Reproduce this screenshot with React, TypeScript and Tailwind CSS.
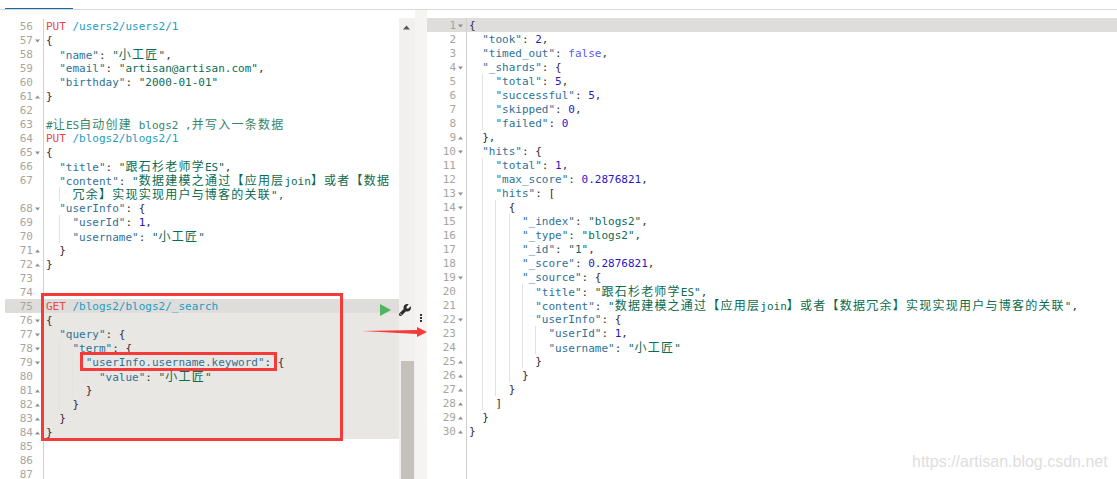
import { ReactNode } from "react";
import { FaWrench } from "react-icons/fa6";

type Row = { n?: number; fold?: "down" | "up"; text: string };

const leftRows: Row[] = [
  { n: 56, text: "PUT /users2/users2/1" },
  { n: 57, fold: "down", text: "{" },
  { n: 58, text: '  "name": "小工匠",' },
  { n: 59, text: '  "email": "artisan@artisan.com",' },
  { n: 60, text: '  "birthday": "2000-01-01"' },
  { n: 61, fold: "up", text: "}" },
  { n: 62, text: "" },
  { n: 63, text: "#让ES自动创建 blogs2 ,并写入一条数据" },
  { n: 64, text: "PUT /blogs2/blogs2/1" },
  { n: 65, fold: "down", text: "{" },
  { n: 66, text: '  "title": "跟石杉老师学ES",' },
  { n: 67, text: '  "content": "数据建模之通过【应用层join】或者【数据' },
  { text: '    冗余】实现实现用户与博客的关联",' },
  { n: 68, fold: "down", text: '  "userInfo": {' },
  { n: 69, text: '    "userId": 1,' },
  { n: 70, text: '    "username": "小工匠"' },
  { n: 71, fold: "up", text: "  }" },
  { n: 72, fold: "up", text: "}" },
  { n: 73, text: "" },
  { n: 74, text: "" },
  { n: 75, text: "GET /blogs2/blogs2/_search" },
  { n: 76, fold: "down", text: "{" },
  { n: 77, fold: "down", text: '  "query": {' },
  { n: 78, fold: "down", text: '    "term": {' },
  { n: 79, fold: "down", text: '      "userInfo.username.keyword": {' },
  { n: 80, text: '        "value": "小工匠"' },
  { n: 81, fold: "up", text: "      }" },
  { n: 82, fold: "up", text: "    }" },
  { n: 83, fold: "up", text: "  }" },
  { n: 84, fold: "up", text: "}" },
  { n: 85, text: "" },
  { n: 86, text: "" },
  { n: 87, text: "" },
];

const rightRows: Row[] = [
  { n: 1, fold: "down", text: "{" },
  { n: 2, text: '  "took": 2,' },
  { n: 3, text: '  "timed_out": false,' },
  { n: 4, fold: "down", text: '  "_shards": {' },
  { n: 5, text: '    "total": 5,' },
  { n: 6, text: '    "successful": 5,' },
  { n: 7, text: '    "skipped": 0,' },
  { n: 8, text: '    "failed": 0' },
  { n: 9, fold: "up", text: "  }," },
  { n: 10, fold: "down", text: '  "hits": {' },
  { n: 11, text: '    "total": 1,' },
  { n: 12, text: '    "max_score": 0.2876821,' },
  { n: 13, fold: "down", text: '    "hits": [' },
  { n: 14, fold: "down", text: "      {" },
  { n: 15, text: '        "_index": "blogs2",' },
  { n: 16, text: '        "_type": "blogs2",' },
  { n: 17, text: '        "_id": "1",' },
  { n: 18, text: '        "_score": 0.2876821,' },
  { n: 19, fold: "down", text: '        "_source": {' },
  { n: 20, text: '          "title": "跟石杉老师学ES",' },
  { n: 21, text: '          "content": "数据建模之通过【应用层join】或者【数据冗余】实现实现用户与博客的关联",' },
  { n: 22, fold: "down", text: '          "userInfo": {' },
  { n: 23, text: '            "userId": 1,' },
  { n: 24, text: '            "username": "小工匠"' },
  { n: 25, fold: "up", text: "          }" },
  { n: 26, fold: "up", text: "        }" },
  { n: 27, fold: "up", text: "      }" },
  { n: 28, fold: "up", text: "    ]" },
  { n: 29, fold: "up", text: "  }" },
  { n: 30, fold: "up", text: "}" },
  { text: "" },
  { text: "" },
  { text: "" },
  { text: "" },
];

// cjk chars sit on a 2-cell grid like in the ace editor
const withCjk = (text: string): ReactNode[] =>
  text.split(/([\u3000-\u9fff]+)/).map((part, i) =>
    /[\u3000-\u9fff]/.test(part) ? (
      <span key={i} className="text-[12px] tracking-[1.24px]">
        {part}
      </span>
    ) : (
      part
    )
  );

const Code = ({ text }: { text: string }) => {
  const indent = text.match(/^ */)![0].length;
  const guides = Math.floor(indent / 2);
  const body = text.slice(guides * 2);
  const parts: ReactNode[] = [];

  if (/^(PUT|GET) /.test(body)) {
    parts.push(
      <span key="m" className="text-[#e8483f]">{body.slice(0, 3)}</span>,
      " ",
      <span key="u" className="text-[#1c9cc0]">{body.slice(4)}</span>
    );
  } else if (body.startsWith("#")) {
    parts.push(<span key="c" className="text-[#36866a]">{withCjk(body)}</span>);
  } else {
    const re = /("[^"]*")(\s*:)?|(\d+(?:\.\d+)?)|(false|true)|([{}\[\]])|([,:])|(\s+)|(\S+)/g;
    let m: RegExpExecArray | null;
    let i = 0;
    while ((m = re.exec(body))) {
      i++;
      if (m[1] && m[2]) {
        parts.push(
          <span key={i} className="text-[#2f7197]">{m[1]}</span>,
          <span key={i + "c"} className="text-[#333333]">{m[2]}</span>
        );
      } else if (m[1]) {
        parts.push(<span key={i} className="text-[#0b6b50]">{withCjk(m[1])}</span>);
      } else if (m[3]) {
        parts.push(<span key={i} className="text-[#2a16c8]">{m[3]}</span>);
      } else if (m[4]) {
        parts.push(<span key={i} className="text-[#585cf6]">{m[4]}</span>);
      } else if (m[5]) {
        parts.push(<span key={i} className="text-[#3a2a3a]">{m[5]}</span>);
      } else if (m[6]) {
        parts.push(<span key={i} className="text-[#333333]">{m[6]}</span>);
      } else if (m[8]) {
        // the wrapped string: one half has no closing quote, the other no opening one
        parts.push(<span key={i} className="text-[#0b6b50]">{withCjk(m[8])}</span>);
      } else {
        parts.push(m[0]);
      }
    }
  }

  return (
    <>
      {Array.from({ length: guides }).map((_, g) => (
        <span
          key={g}
          className={
            g === 0
              ? "inline-block w-[2ch] h-[14px] align-top"
              : "inline-block w-[2ch] h-[14px] align-top border-l border-[#e4e2de]"
          }
        />
      ))}
      {parts}
    </>
  );
};

const Fold = ({ dir }: { dir?: "down" | "up" }) => (
  <span className="w-[10px] h-[14px] flex items-center justify-center pr-[1px] pt-[1px]">
    {dir && (
      <svg width="5" height="4" viewBox="0 0 5 4">
        <path d={dir === "down" ? "M0 0.5h5L2.5 3.5z" : "M0 3.5h5L2.5 0.5z"} fill="#8e8e8e" />
      </svg>
    )}
  </span>
);

const Editor = ({
  rows,
  gutter,
  active,
  selected,
}: {
  rows: Row[];
  gutter: string;
  active?: number;
  selected?: (n?: number) => boolean;
}) => (
  <div className="flex flex-col">
    {rows.map((row, i) => {
      const isActive = row.n === active;
      const isSel = selected?.(row.n);
      return (
        <div key={i} className={isActive ? "flex h-[14px] bg-[#dfdddb]" : "flex h-[14px]"}>
          <div className={`${gutter} shrink-0 flex justify-end border-r border-[#d3d1cd] text-[#a9a59e]`}>
            <span>{row.n}</span>
            <Fold dir={row.fold} />
          </div>
          <div
            className={
              isSel
                ? "flex-1 pl-[2px] whitespace-pre bg-[#e9e7e3]"
                : "flex-1 pl-[2px] whitespace-pre"
            }
          >
            <Code text={row.text} />
          </div>
        </div>
      );
    })}
  </div>
);

export default function App() {
  return (
    <div className="relative w-[1117px] h-[479px] overflow-hidden bg-white flex flex-col font-['DejaVu_Sans_Mono','Noto_Sans_CJK_SC',monospace] text-[11px] leading-[16px]">
      <div className="h-[10px] shrink-0 border-b border-[#d9d9d9] pl-[5px]">
        <div className="w-[68px] h-[9px] border-b border-[#0b6fa4]" />
      </div>

      <div className="flex-1 flex min-h-0">
        <div className="w-[399px] shrink-0 pl-[5px] pt-[9px] overflow-hidden">
          <Editor
            rows={leftRows}
            gutter="w-[39px]"
            active={75}
            selected={(n) => n !== undefined && n >= 76 && n <= 84}
          />
        </div>

        <div className="w-[16px] shrink-0 mt-[8px] bg-[#f1f0ee] flex flex-col items-center">
          <svg className="mt-[7px] ml-[-1px]" width="7" height="5" viewBox="0 0 7 5">
            <path d="M0 4.5h7L3.5 0.5z" fill="#555555" />
          </svg>
          <div className="flex-1" />
          <div className="w-[13px] h-[118px] bg-[#c3c1b9]" />
        </div>

        <div className="w-[12px] shrink-0 bg-[#f5f4f2] pt-[304px] flex flex-col items-center gap-[1px]">
          <span className="w-[2px] h-[2px] bg-[#333333]" />
          <span className="w-[2px] h-[2px] bg-[#333333]" />
          <span className="w-[2px] h-[2px] bg-[#333333]" />
        </div>

        <div className="flex-1 pt-[8px] overflow-hidden">
          <Editor rows={rightRows} gutter="w-[40px]" active={1} />
        </div>
      </div>

      {/* action icons on the active request line */}
      <svg className="absolute left-[380px] top-[304px]" width="11" height="12" viewBox="0 0 11 12">
        <path d="M0 0l11 6L0 12z" fill="#4fb560" />
      </svg>
      <FaWrench className="absolute left-[399px] top-[304px] text-[#2b2b2b]" size={12} />

      {/* red annotations on the screenshot */}
      <div className="absolute left-[41px] top-[293px] w-[302px] h-[148px] border-[3px] border-[#f53a3a]" />
      <div className="absolute left-[80px] top-[352px] w-[197px] h-[19px] border-[3px] border-[#f53a3a]" />
      <svg className="absolute left-[361px] top-[326px]" width="66" height="12" viewBox="0 0 66 12">
        <path d="M1 5L56 4V1L66 6L56 11V8z" fill="#f53a3a" />
      </svg>

      <span className="absolute left-[912px] top-[452px] font-['Liberation_Sans',sans-serif] text-[16px] leading-[20px] text-[#dedede]">
        https://artisan.blog.csdn.net
      </span>
    </div>
  );
}
